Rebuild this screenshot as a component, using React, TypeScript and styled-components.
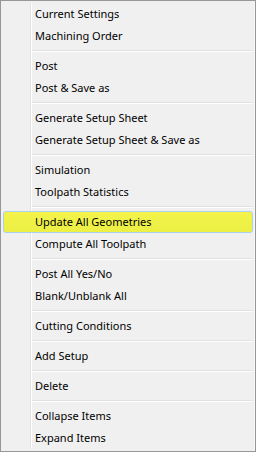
import React from 'react';
import styled, { createGlobalStyle } from 'styled-components';

const GlobalStyle = createGlobalStyle`
  html, body {
    margin: 0;
    padding: 0;
    background: #ffffff;
  }
`;

const Menu = styled.div`
  box-sizing: border-box;
  width: 256px;
  height: 452px;
  border: 1px solid #979797;
  background: #f0f0f0;
  padding: 2px;
  display: flex;
  flex-direction: column;
  position: relative;
  font-family: 'Noto Sans', 'Open Sans', 'Liberation Sans', sans-serif;
  font-size: 11px;
  color: #000000;
  box-shadow: inset -1px 0 0 #f7f7f7;
`;

const Gutter = styled.div`
  position: absolute;
  top: 2px;
  bottom: 2px;
  left: 29px;
  width: 1px;
  background: #e2e3e3;
  border-right: 1px solid #ffffff;
`;

const Item = styled.div<{ $hot?: boolean }>`
  box-sizing: border-box;
  height: 22px;
  display: flex;
  align-items: center;
  padding-left: 31px;
  padding-bottom: 1px;
  position: relative;
  z-index: 1;
  white-space: nowrap;
  border: 1px solid ${({ $hot }) => ($hot ? '#a8d2f0' : 'transparent')};
  border-radius: 3px;
  background: ${({ $hot }) => ($hot ? 'linear-gradient(#f3f34c, #ecef44)' : 'transparent')};
`;

const Separator = styled.div`
  height: 8px;
  margin-left: 28px;
  display: flex;
  flex-direction: column;
  justify-content: center;
  &::before {
    content: '';
    height: 1px;
    background: #e0e0e0;
  }
  &::after {
    content: '';
    height: 1px;
    background: #ffffff;
  }
`;

type Entry = string | null;

const entries: Entry[] = [
  'Current Settings',
  'Machining Order',
  null,
  'Post',
  'Post & Save as',
  null,
  'Generate Setup Sheet',
  'Generate Setup Sheet & Save as',
  null,
  'Simulation',
  'Toolpath Statistics',
  null,
  'Update All Geometries',
  'Compute All Toolpath',
  null,
  'Post All Yes/No',
  'Blank/Unblank All',
  null,
  'Cutting Conditions',
  null,
  'Add Setup',
  null,
  'Delete',
  null,
  'Collapse Items',
  'Expand Items',
];

export default function App() {
  return (
    <>
      <GlobalStyle />
      <Menu>
        <Gutter />
        {entries.map((label, i) =>
          label === null ? (
            <Separator key={i} />
          ) : (
            <Item key={i} $hot={label === 'Update All Geometries'}>
              {label}
            </Item>
          ),
        )}
      </Menu>
    </>
  );
}
